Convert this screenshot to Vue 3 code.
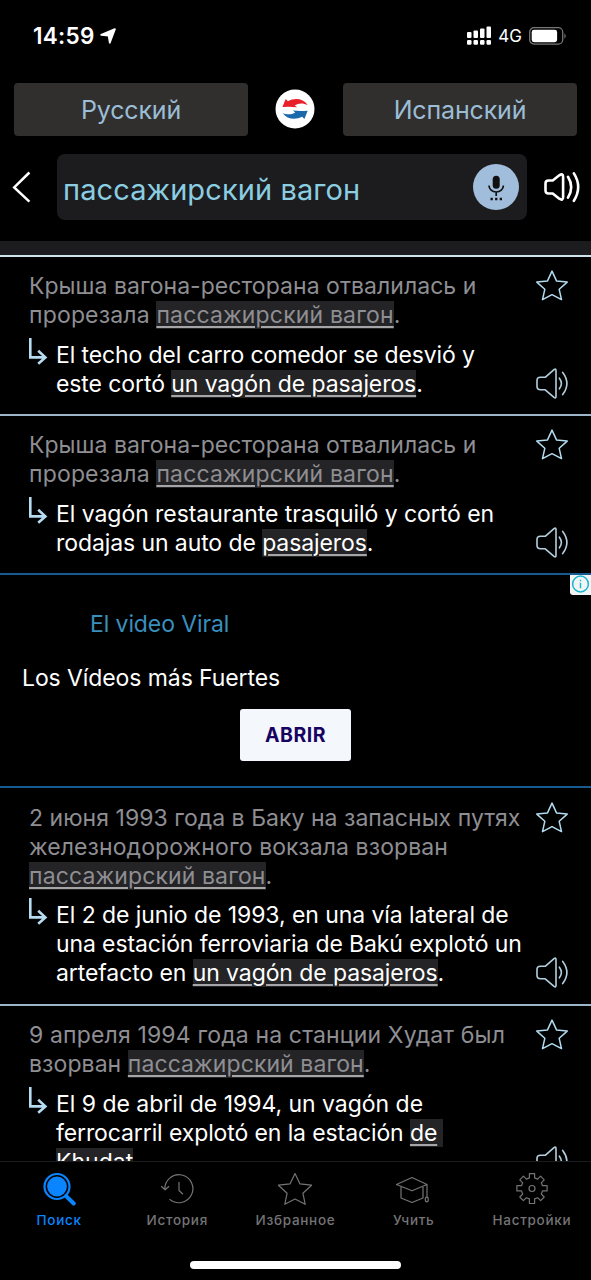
<script setup>
const ru = [
  { ls: 0.04, parts: [{ t: 'Крыша вагона-ресторана отвалилась и' }] },
  { ls: 0.16, parts: [{ t: 'прорезала ' }, { t: 'пассажирский вагон', hit: true }, { t: '.' }] },
]

const entries = [
  {
    source: ru,
    target: [
      { ls: -0.13, parts: [{ t: 'El techo del carro comedor se desvió y' }] },
      { ls: -0.09, parts: [{ t: 'este cortó ' }, { t: 'un vagón de pasajeros', hit: true }, { t: '.' }] },
    ],
  },
  {
    blue: true,
    source: ru,
    target: [
      { ls: -0.05, parts: [{ t: 'El vagón restaurante trasquiló y cortó en' }] },
      { ls: -0.09, parts: [{ t: 'rodajas un auto de ' }, { t: 'pasajeros', hit: true }, { t: '.' }] },
    ],
  },
  { ad: true },
  {
    low: true,
    source: [
      { ls: 0.03, parts: [{ t: '2 июня 1993 года в Баку на запасных путях' }] },
      { ls: 0.1, parts: [{ t: 'железнодорожного вокзала взорван' }] },
      { ls: 0.12, parts: [{ t: 'пассажирский вагон', hit: true }, { t: '.' }] },
    ],
    target: [
      { ls: -0.07, parts: [{ t: 'El 2 de junio de 1993, en una vía lateral de' }] },
      { ls: -0.12, parts: [{ t: 'una estación ferroviaria de Bakú explotó un' }] },
      { ls: -0.09, parts: [{ t: 'artefacto en ' }, { t: 'un vagón de pasajeros', hit: true }, { t: '.' }] },
    ],
  },
  {
    source: [
      { ls: 0.15, parts: [{ t: '9 апреля 1994 года на станции Худат был' }] },
      { ls: 0.08, parts: [{ t: 'взорван ' }, { t: 'пассажирский вагон', hit: true }, { t: '.' }] },
    ],
    target: [
      { ls: -0.03, parts: [{ t: 'El 9 de abril de 1994, un vagón de' }] },
      { ls: -0.11, parts: [{ t: 'ferrocarril explotó en la estación ' }, { t: 'de', hit: true, tail: true }] },
      { ls: 0, parts: [{ t: 'Khudat', hit: true }, { t: '.' }] },
    ],
  },
]

const tabs = [
  { id: 'search', label: 'Поиск' },
  { id: 'history', label: 'История' },
  { id: 'favorites', label: 'Избранное' },
  { id: 'learn', label: 'Учить' },
  { id: 'settings', label: 'Настройки' },
]
</script>

<template>
  <div class="screen">
    <header class="status">
      <span class="clock">14:59</span>
      <svg class="loc" width="16" height="16" viewBox="0 0 16 16"><path d="M14.900 1.200 9.800 14.700 8.600 7.600 1.200 6.900Z" fill="#fff" stroke="#fff" stroke-width="1.800" stroke-linejoin="round" /></svg>
      <span class="grow"></span>
      <svg class="signal" width="25" height="19" viewBox="0 0 25 19" fill="#fff">
        <rect x="0" y="6" width="4.500" height="6" rx="1" /><rect x="6.500" y="4.600" width="4.500" height="7.400" rx="1" /><rect x="13" y="2.500" width="4.500" height="9.500" rx="1" /><rect x="19.500" y="0.400" width="4.500" height="11.600" rx="1" />
        <rect x="0" y="14" width="4.500" height="4.800" rx="1.200" /><rect x="6.500" y="14" width="4.500" height="4.800" rx="1.200" /><rect x="13" y="14" width="4.500" height="4.800" rx="1.200" /><rect x="19.500" y="14" width="4.500" height="4.800" rx="1.200" />
      </svg>
      <span class="net">4G</span>
      <svg class="battery" width="38" height="18" viewBox="0 0 38 18">
        <rect x="0.7" y="0.7" width="33" height="16.4" rx="4.4" fill="none" stroke="#777" stroke-width="1.3" />
        <rect x="2.7" y="2.8" width="25.4" height="12.4" rx="2.4" fill="#fff" />
        <path d="M35.4 6.2q2.6 2.8 0 5.6z" fill="#777" />
      </svg>
    </header>

    <div class="langs">
      <button class="lang">Русский</button>
      <svg class="swap" width="40" height="40" viewBox="0 0 40 40">
        <circle cx="20" cy="20" r="19.5" fill="#fff" />
        <path d="M7.400 18.100 10.700 10l2.200 2.200c7-3.700 15.100-2.900 19.800 3.800-4.600-2.300-9.300-2.100-13 .4l2.400 1.900q-7.400-.8-14.700-.2Z" fill="#e8202a" />
        <path d="M32.700 21.700 29.400 30l-2.200-2.300c-6.800 3.400-15.100 2.600-19.700-3.800 4.600 2.200 9.200 1.800 12.800-.5l-2.400-1.800q7.400.8 14.800.1Z" fill="#1a69ad" />
      </svg>
      <button class="lang">Испанский</button>
    </div>

    <div class="searchrow">
      <svg class="back" width="20" height="34" viewBox="0 0 20 34"><path d="M17.400 2.500 2.200 17.400 17.400 31.600" fill="none" stroke="#fff" stroke-width="2.500" /></svg>
      <div class="field">
        <span class="query">пассажирский вагон</span>
        <svg width="46" height="46" viewBox="0 0 46 46">
          <circle cx="23" cy="23" r="23" fill="#a0bedb" />
          <rect x="19.700" y="11.700" width="7" height="13" rx="3.500" fill="#111" />
          <path d="M16 21.500a7.200 6.500 0 0 0 14.400 0M23.200 28v4" fill="none" stroke="#111" stroke-width="1.700" />
          <path d="M17.500 35h2.300m2.300 0h2.300m2.300 0h2.300" stroke="#111" stroke-width="2.300" />
        </svg>
      </div>
      <svg class="say" width="38" height="32" viewBox="0 0 38 32" fill="none" stroke="#fff" stroke-width="2.600" stroke-linejoin="round" stroke-linecap="round">
        <path d="M2.500 12.500q0-3 3-3h4.200l6.600-5.200q3.800-2.400 3.800 1.700v20q0 4.100-3.800 1.700l-6.600-5.200H5.500q-3 0-3-3Z" />
        <path d="M25 5.800q6.400 10.400 0 20.800M30.900 2.400q8.600 13.700 0 27.400" />
      </svg>
    </div>

    <div class="band"></div>

    <main class="list">
      <template v-for="(e, i) in entries" :key="i">
        <section v-if="e.ad" class="ad">
          <svg class="adinfo" width="21" height="20" viewBox="0 0 21 20">
            <path d="M0 0h21v20H3q-3 0-3-3Z" fill="#f1f5f6" />
            <circle cx="10.500" cy="9" r="7.900" fill="none" stroke="#19b5cf" stroke-width="1.500" />
            <path d="M10.500 7.800v5.400M10.500 4.700v1.600" stroke="#19b5cf" stroke-width="1.400" />
          </svg>
          <div class="adtitle">El video Viral</div>
          <div class="adtext">Los Vídeos más Fuertes</div>
          <button class="open">ABRIR</button>
        </section>
        <article v-else class="entry" :class="{ blue: e.blue, low: e.low }">
          <div class="texts">
            <div class="source">
              <div v-for="(l, j) in e.source" :key="j" class="line" :style="{ letterSpacing: l.ls + 'px' }"><span v-for="(p, k) in l.parts" :key="k" :class="{ hit: p.hit, tail: p.tail }">{{ p.t }}</span></div>
            </div>
            <div class="target">
              <svg class="turn" width="20" height="28" viewBox="0 0 20 28" fill="none" stroke="#b5dcf1" stroke-width="2.600"><path d="M2.300 1v19.400H17M10.200 13.800l7.200 6.600-7.200 6.300" /></svg>
              <div>
                <div v-for="(l, j) in e.target" :key="j" class="line" :style="{ letterSpacing: l.ls + 'px' }"><span v-for="(p, k) in l.parts" :key="k" :class="{ hit: p.hit, tail: p.tail }">{{ p.t }}</span></div>
              </div>
            </div>
          </div>
          <div class="actions">
            <svg width="32" height="31" viewBox="0 0 32 31" fill="none" stroke="#b3dcf0" stroke-width="1.500" stroke-linejoin="round"><path d="m16 1.100 4.500 9.800 10.700 1.200-8 7.200 2.300 10.300L16 24.700 6.500 29.600l2.300-10.300-8-7.200 10.700-1.200Z" /></svg>
            <svg width="33" height="31" viewBox="0 0 33 31" fill="none" stroke="#b3cfdf" stroke-width="1.600" stroke-linejoin="round" stroke-linecap="round">
              <path d="M1 12.500q0-3.200 3.500-3.200h4.700L18 1.600q2-1.300 2 1v25.800q0 2.300-2 1L9.200 21.800H4.500Q1 21.800 1 18.600Z" />
              <path d="M23.400 10.200q4 5.300 0 10.600M26.700 4.400q8.400 11.100 0 22.200" />
            </svg>
          </div>
        </article>
      </template>
    </main>

    <nav class="tabs">
      <div v-for="t in tabs" :key="t.id" class="tab" :class="{ active: t.id === 'search' }">
        <svg width="36" height="34" viewBox="0 0 36 34" fill="none" stroke="currentColor" stroke-width="1.200" stroke-linejoin="round">
          <template v-if="t.id === 'search'">
            <circle cx="16" cy="14.500" r="12.500" stroke-width="2.200" />
            <circle cx="16" cy="14.500" r="9.900" fill="currentColor" stroke="none" />
            <path d="m25.500 24.500 7.200 7" stroke-width="4" stroke-linecap="round" />
            <path d="m24 22.500 3 3" stroke-width="2.500" />
          </template>
          <template v-else-if="t.id === 'history'">
            <path d="M5.900 17.500a14 14 0 1 1 4.600 9.600M2.200 14.300l3.900 3.500 3.900-3.500M20 10v8.500l4 3.700" />
          </template>
          <template v-else-if="t.id === 'favorites'">
            <path d="m18 1.500 4.900 10.300 11.700 1.400-8.700 8 2.300 11.100L18 27l-10.200 5.300 2.300-11.100-8.700-8 11.700-1.400Z" />
          </template>
          <template v-else-if="t.id === 'learn'">
            <path d="M.5 12.500 16 5.500l15 7L16 18.800ZM5 15v11l11 4.500L27 26V15M31 12.500V25" />
            <ellipse cx="30.800" cy="27.500" rx="1.500" ry="2.300" />
          </template>
          <template v-else>
            <path d="M15.400 1.700h5.200v4.200l3 1.200 3-3 3.600 3.700-2.900 3 1.200 2.900h4.600v5.200h-4.600L27.300 22l2.900 3-3.600 3.700-3-3-3 1.200v4.600h-5.200v-4.600l-3-1.200-3 3L5.800 25l2.900-3-1.200-3.100H2.900v-5.200h4.600l1.200-2.900-2.900-3 3.600-3.700 3 3 3-1.200Z" />
            <circle cx="18" cy="16.500" r="3" />
          </template>
        </svg>
        <span>{{ t.label }}</span>
      </div>
      <i class="home"></i>
    </nav>
  </div>
</template>

<style>
body { margin: 0; background: #000; }
</style>

<style scoped>
.screen { width: 591px; height: 1280px; overflow: hidden; background: #000; color: #fff; font-family: Inter, "Liberation Sans", sans-serif; display: flex; flex-direction: column; }
.screen * { box-sizing: border-box; }
svg { display: block; flex: none; }
button { border: 0; padding: 0; font-family: inherit; }
.status { height: 83px; flex: none; display: flex; align-items: center; padding: 0 24px 12px 33px; }
.clock { font-size: 22.500px; font-weight: 600; letter-spacing: 0.300px; }
.loc { margin-left: 5px; }
.grow { flex: 1; }
.net { font-size: 17px; font-weight: 400; margin: 1px 7px 0 6px; }
.langs { height: 53px; flex: none; display: flex; justify-content: space-between; align-items: center; padding: 0 14px; }
.swap { margin: -1px 1px 0 0; }
.lang { width: 234px; height: 53px; border-radius: 4px; background: #302f2e; color: #9bbdd5; font-size: 25px; letter-spacing: -0.150px; }
.searchrow { height: 105px; flex: none; display: flex; align-items: center; padding: 0 8px 3px 12px; }
.field { width: 470px; height: 66px; margin-left: 25px; border-radius: 8px; background: #1c1c1e; display: flex; align-items: center; justify-content: space-between; padding: 0 8px 0 6px; }
.query { color: #8bcee2; font-size: 29px; line-height: 40px; padding-top: 5px; letter-spacing: 0.100px; }
.say { margin-left: 16px; }
.band { height: 16px; flex: none; background: #1c1c1e; border-bottom: 2px solid #cfe4ea; }
.list { flex: 1; min-height: 0; overflow: hidden; }
.entry { display: flex; justify-content: space-between; padding: 15px 22px 15px 29px; border-bottom: 2px solid #9bb5c9; }
.blue { border-bottom-color: #155a91; }
.low { padding-top: 16px; }
.line { height: 29px; line-height: 29px; font-size: 23px; white-space: pre; }
.source { color: #8e8e93; }
.target { display: flex; margin-top: 11px; }
.low .target { margin-top: 10px; }
.low { padding-bottom: 16px; }
.turn { margin: -4px 8px 0 -1px; }
.hit { background: #242426; text-decoration: underline; text-decoration-thickness: 1.500px; text-underline-offset: 3px; text-decoration-color: #a5a5a8; }
.tail { padding-right: 6px; }
.actions { display: flex; flex-direction: column; justify-content: space-between; flex: none; margin-top: -2px; }
.ad { height: 213px; position: relative; border-bottom: 2px solid #155a91; display: flex; flex-direction: column; }
.adinfo { position: absolute; right: 0; top: 0; }
.adtitle { margin: 34px 0 0 90px; line-height: 30px; font-size: 23px; color: #398fbd; letter-spacing: -0.100px; }
.adtext { margin: 24px 0 0 22px; line-height: 30px; font-size: 23px; letter-spacing: -0.090px; }
.open { width: 111px; height: 52px; margin: 16px auto 0; border-radius: 3px; background: #f4f8fc; color: #180363; font-size: 19.500px; font-weight: 700; letter-spacing: 0.500px; }
.tabs { height: 119px; flex: none; position: relative; display: grid; grid-template-columns: repeat(5, 1fr); border-top: 1px solid #1b1b1c; }
.tab { display: flex; flex-direction: column; align-items: center; color: #747476; padding-top: 10px; font-size: 13.500px; font-weight: 500; letter-spacing: 0.700px; line-height: 18px; }
.tab span { margin-top: 5px; }
.tab.active { color: #0a84ff; }
.home { position: absolute; left: 190px; bottom: 11px; width: 211px; height: 8px; border-radius: 4px; background: #fff; }
</style>
